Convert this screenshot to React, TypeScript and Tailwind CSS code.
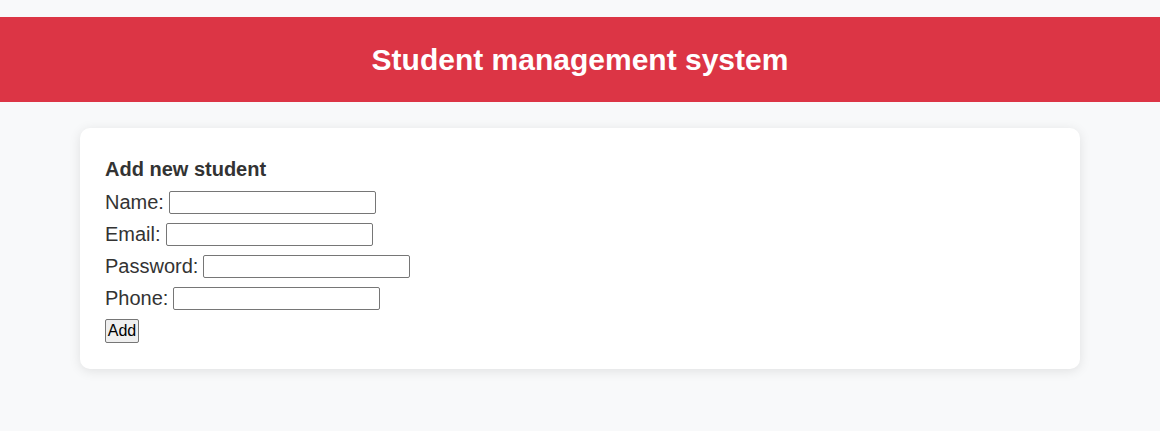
export default function App() {
  const fields = [
    { label: 'Name:', type: 'text' },
    { label: 'Email:', type: 'email' },
    { label: 'Password:', type: 'password' },
    { label: 'Phone:', type: 'text' },
  ];

  return (
    <div className="min-h-[431px] bg-[#f8f9fa] pt-[17px] font-['Liberation_Sans',Arial,sans-serif] text-[#333]">
      <header className="flex h-[85px] items-center justify-center bg-[#dc3545]">
        <h1 className="text-[30px] font-bold text-white">Student management system</h1>
      </header>

      <main className="mx-auto mt-[26px] w-[1000px] rounded-[10px] bg-white px-[25px] pt-[29px] pb-[26px] shadow-[0_2px_12px_rgba(0,0,0,0.1)]">
        <h3 className="h-[24px] text-[20px] leading-[24px] font-bold">Add new student</h3>
        <div className="mt-[5px] flex flex-col">
          {fields.map((f) => (
            <label key={f.label} className="flex h-8 items-center text-[20px]">
              <span>{f.label}</span>
              <input
                type={f.type}
                className="ml-[5px] h-[23px] w-[207px] rounded-[2px] border border-[#767676] bg-white px-1 text-[13px]"
              />
            </label>
          ))}
        </div>
        <button className="mt-[5px] flex h-[24px] w-[34px] items-center justify-center rounded-[2px] border border-[#767676] bg-[#efefef] text-[16px] text-black">
          Add
        </button>
      </main>
    </div>
  );
}
